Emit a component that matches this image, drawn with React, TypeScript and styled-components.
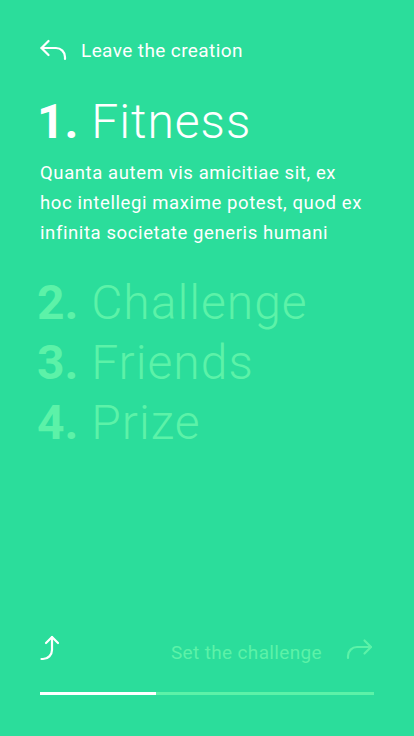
import React from 'react';
import styled, { createGlobalStyle } from 'styled-components';

const GlobalStyle = createGlobalStyle`
  html, body {
    margin: 0;
    padding: 0;
    background: #2bdd9b;
  }
  * {
    box-sizing: border-box;
  }
`;

const steps = [
  { num: '2.', label: 'Challenge' },
  { num: '3.', label: 'Friends' },
  { num: '4.', label: 'Prize' },
];

const BackIcon = () => (
  <svg width="28" height="24" viewBox="0 0 28 24" fill="none" stroke="currentColor" strokeWidth="2.2" strokeLinecap="round" strokeLinejoin="round">
    <path d="M8.5 3 L1.5 10 L8.5 17" />
    <path d="M1.5 10 H16 a9 9 0 0 1 9 9 V21" />
  </svg>
);

const UpIcon = () => (
  <svg width="24" height="28" viewBox="0 0 24 28" fill="none" stroke="currentColor" strokeWidth="2.2" strokeLinecap="round" strokeLinejoin="round">
    <path d="M6 8 L12 2 L18 8" />
    <path d="M12 2 V15 a9 9 0 0 1 -9 9 H1.5" />
  </svg>
);

const NextIcon = () => (
  <svg width="28" height="24" viewBox="0 0 28 24" fill="none" stroke="currentColor" strokeWidth="2.2" strokeLinecap="round" strokeLinejoin="round">
    <path d="M2 21 V19 a9 9 0 0 1 9 -9 H25" />
    <path d="M18.5 3.5 L25 10 L18.5 16.5" />
  </svg>
);

const App: React.FC = () => {
  return (
    <>
      <GlobalStyle />
      <Page>
        <Header>
          <IconButton>
            <BackIcon />
          </IconButton>
          <HeaderText>Leave the creation</HeaderText>
        </Header>

        <Current>
          <Num>1.</Num> Fitness
        </Current>
        <Description>
          Quanta autem vis amicitiae sit, ex hoc intellegi maxime potest, quod ex infinita societate generis humani
        </Description>

        <StepList>
          {steps.map((s) => (
            <StepTitle key={s.num} faded>
              <Num>{s.num}</Num> {s.label}
            </StepTitle>
          ))}
        </StepList>

        <Footer>
          <FooterRow>
            <IconButton>
              <UpIcon />
            </IconButton>
            <NextGroup>
              <NextText>Set the challenge</NextText>
              <IconButton faded>
                <NextIcon />
              </IconButton>
            </NextGroup>
          </FooterRow>
          <Progress>
            <ProgressFill style={{ width: `${(116 / 334) * 100}%` }} />
          </Progress>
        </Footer>
      </Page>
    </>
  );
};

export default App;

const Page = styled.div`
  width: 414px;
  height: 736px;
  padding: 36px 40px 41px;
  display: flex;
  flex-direction: column;
  background: #2bdd9b;
  color: #ffffff;
  font-family: Roboto, 'Noto Sans', sans-serif;
  overflow: hidden;
`;

const Header = styled.div`
  display: flex;
  align-items: center;
  gap: 13px;
  height: 28px;
`;

const IconButton = styled.div<{ faded?: boolean }>`
  display: flex;
  align-items: center;
  justify-content: center;
  color: ${(p) => (p.faded ? '#5cf2a8' : '#ffffff')};
`;

const HeaderText = styled.span`
  font-size: 19px;
  font-weight: 400;
  letter-spacing: 0.4px;
`;

const StepTitle = styled.h1<{ faded?: boolean }>`
  margin: 0 0 0 -3px;
  font-size: 48px;
  line-height: 60px;
  font-weight: 300;
  letter-spacing: 1px;
  white-space: nowrap;
  color: ${(p) => (p.faded ? '#5cf2a8' : '#ffffff')};
`;

const Current = styled(StepTitle)`
  margin-top: 28px;
`;

const Num = styled.span`
  font-weight: 700;
  letter-spacing: 0;
`;

const Description = styled.p`
  margin: 6px 0 0;
  padding-right: 6px;
  font-size: 18.5px;
  line-height: 30px;
  font-weight: 400;
  letter-spacing: 0.6px;
`;

const StepList = styled.div`
  margin-top: 25px;
  display: flex;
  flex-direction: column;
`;

const Footer = styled.div`
  margin-top: auto;
  display: flex;
  flex-direction: column;
  gap: 29px;
`;

const FooterRow = styled.div`
  display: flex;
  align-items: center;
  justify-content: space-between;
  height: 28px;
`;

const NextGroup = styled.div`
  display: flex;
  align-items: center;
  gap: 24px;
`;

const NextText = styled.span`
  font-size: 19px;
  letter-spacing: 0.35px;
  padding-top: 6px;
  color: #5cf2a8;
`;

const Progress = styled.div`
  height: 3px;
  background: #5cf2a8;
`;

const ProgressFill = styled.div`
  height: 100%;
  background: #ffffff;
`;
